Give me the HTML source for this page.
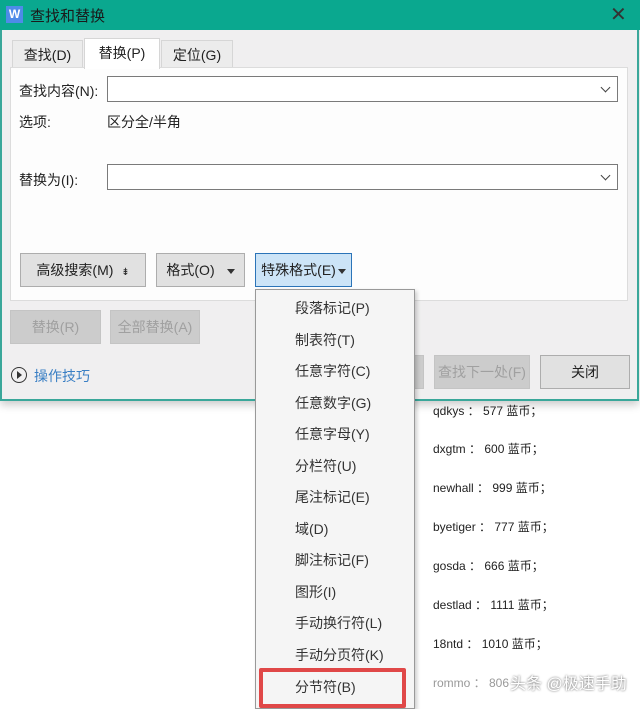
<!DOCTYPE html>
<html><head><meta charset="utf-8"><style>
*{margin:0;padding:0;box-sizing:border-box}
body{width:640px;height:703px;overflow:hidden;background:#fff;position:relative;font-family:"Liberation Sans","Noto Sans CJK SC",sans-serif;font-size:14px;color:#222}
.a{position:absolute}
#dlg{left:0;top:0;width:639px;height:401px;background:#f0eff0;border:2px solid #3aa79a;border-top:none;box-shadow:0 4px 8px rgba(0,0,0,.2)}
#title{left:0;top:0;width:640px;height:30px;background:#0aa88f}
.tab{height:29px;top:40px;border:1px solid #d6d6d6;border-bottom:none;background:#ececec;text-align:center;line-height:28px}
.inp{background:#fff;border:1px solid #7a7a7a;height:26px;left:107px;width:511px}
.inp::after{content:"";position:absolute;right:8px;top:7px;width:6px;height:6px;border-right:1.3px solid #444;border-bottom:1.3px solid #444;transform:rotate(45deg)}
.btn{background:#e1e1e1;border:1px solid #adadad;height:34px;line-height:32px;text-align:center}
.dis{background:#cccccc;border:1px solid #c4c4c4;color:#a0a0a0;height:34px;line-height:32px;text-align:center}
.tri{display:inline-block;border-left:4px solid transparent;border-right:4px solid transparent;border-top:5px solid #333;vertical-align:middle;margin-left:6px}
.mi{left:295px;font-size:14px;color:#333}
.doc{left:433px;font-size:12px;color:#222}
</style></head><body>
<div id="dlg" class="a"></div>
<div id="title" class="a"></div>
<div class="a" style="left:6px;top:6px;width:17px;height:17px;background:#4e8be8;color:#fff;font-size:12px;font-weight:bold;text-align:center;line-height:17px">W</div>
<div class="a" style="left:30px;top:5px;font-size:15px;color:#1a1a1a">查找和替换</div>
<div class="a" style="left:610px;top:2px;font-size:20px;color:#333">✕</div>
<div class="a tab" style="left:12px;width:71px">查找(D)</div>
<div class="a tab" style="left:84px;width:76px;background:#fff;top:38px;height:31px;z-index:2">替换(P)</div>
<div class="a tab" style="left:161px;width:72px">定位(G)</div>
<div class="a" style="left:10px;top:67px;width:618px;height:234px;background:#fdfdfd;border:1px solid #dcdcdc"></div>
<div class="a" style="left:19px;top:81px">查找内容(N):</div>
<div class="a inp" style="top:76px"></div>
<div class="a" style="left:19px;top:112px">选项:</div>
<div class="a" style="left:107px;top:112px">区分全/半角</div>
<div class="a" style="left:19px;top:170px">替换为(I):</div>
<div class="a inp" style="top:164px"></div>
<div class="a btn" style="left:20px;top:253px;width:126px">高级搜索(M)&nbsp;&nbsp;<span style="font-size:10px">⇟</span></div>
<div class="a btn" style="left:156px;top:253px;width:89px">格式(O)<span class="tri" style="margin-left:12px"></span></div>
<div class="a btn" style="left:255px;top:253px;width:97px;background:#cce4f7;border-color:#2b74b8">特殊格式(E)<span class="tri" style="margin-left:2px"></span></div>
<div class="a dis" style="left:10px;top:310px;width:91px">替换(R)</div>
<div class="a dis" style="left:110px;top:310px;width:90px">全部替换(A)</div>
<div class="a dis" style="left:400px;top:355px;width:24px"></div>
<div class="a dis" style="left:434px;top:355px;width:96px">查找下一处(F)</div>
<div class="a btn" style="left:540px;top:355px;width:90px">关闭</div>
<div class="a" style="left:11px;top:367px;width:16px;height:16px;border:1.5px solid #333;border-radius:50%"></div>
<div class="a" style="left:17px;top:371px;border-top:4px solid transparent;border-bottom:4px solid transparent;border-left:5px solid #333"></div>
<div class="a" style="left:34px;top:366px;color:#3a7fc4">操作技巧</div>
<div class="a doc" style="top:402px">qdkys ： 577 蓝币；</div>
<div class="a doc" style="top:440px">dxgtm ： 600 蓝币；</div>
<div class="a doc" style="top:479px">newhall ： 999 蓝币；</div>
<div class="a doc" style="top:518px">byetiger ： 777 蓝币；</div>
<div class="a doc" style="top:557px">gosda ： 666 蓝币；</div>
<div class="a doc" style="top:596px">destlad ： 1111 蓝币；</div>
<div class="a doc" style="top:635px">18ntd ： 1010 蓝币；</div>
<div class="a doc" style="top:674px;color:#999">rommo ： 806</div>
<div class="a" style="left:255px;top:289px;width:160px;height:420px;background:#f5f5f5;border:1px solid #999;box-shadow:2px 2px 4px rgba(0,0,0,.2)"></div>
<div class="a mi" style="top:298px">段落标记(P)</div>
<div class="a mi" style="top:330px">制表符(T)</div>
<div class="a mi" style="top:361px">任意字符(C)</div>
<div class="a mi" style="top:393px">任意数字(G)</div>
<div class="a mi" style="top:424px">任意字母(Y)</div>
<div class="a mi" style="top:456px">分栏符(U)</div>
<div class="a mi" style="top:487px">尾注标记(E)</div>
<div class="a mi" style="top:519px">域(D)</div>
<div class="a mi" style="top:550px">脚注标记(F)</div>
<div class="a mi" style="top:582px">图形(I)</div>
<div class="a mi" style="top:613px">手动换行符(L)</div>
<div class="a mi" style="top:645px">手动分页符(K)</div>
<div class="a mi" style="top:677px">分节符(B)</div>
<div class="a" style="left:259px;top:668px;width:147px;height:40px;border:4px solid #e04848;border-radius:2px"></div>
<div class="a" style="left:510px;top:670px;font-size:16px;color:#fff;text-shadow:0 0 2px #555">头条 @极速手助</div>
</body></html>
